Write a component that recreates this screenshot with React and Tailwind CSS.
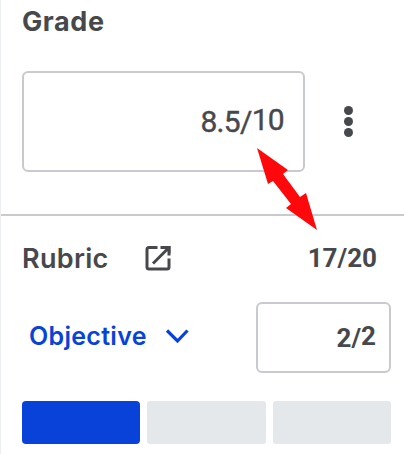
function GradeHeader() {
  return (
    <div className="flex h-[71px] items-start pl-[22px] pt-1">
      <h1 className="text-[27px] font-bold leading-9 tracking-[0.6px]">Grade</h1>
    </div>
  );
}

function GradeInput() {
  return (
    <div className="flex h-[143px] items-start pl-[22px]">
      <div className="flex h-[101px] w-[283px] items-center justify-end rounded-[6px] border-2 border-[#c9cad0] pr-[19px] font-['Roboto',sans-serif] text-[30px] leading-none tracking-[-0.7px]">
        <span className="[-webkit-text-stroke:0.4px_#47484c]">8.5/</span>
        <span className="relative -top-[2px] [-webkit-text-stroke:0.4px_#47484c]">10</span>
      </div>
      <button aria-label="More options" className="ml-[38px] mt-[35px] flex w-[10px] flex-col items-center gap-[2px]">
        <span className="size-[9px] rounded-full bg-[#47484c]" />
        <span className="size-[9px] rounded-full bg-[#47484c]" />
        <span className="size-[9px] rounded-full bg-[#47484c]" />
      </button>
    </div>
  );
}

function RubricRow() {
  return (
    <div className="flex h-[87px] items-start border-t-2 border-[#c9cad0] pl-[22px] pr-[27px] pt-[25px]">
      <h2 className="w-[123px] text-[27px] font-semibold leading-9 tracking-[0.3px]">Rubric</h2>
      <svg className="mt-[4px]" width="26" height="26" viewBox="0 0 26 26" fill="none" stroke="#47484c" strokeWidth="3">
        <path d="M12.5 2.5H4Q2 2.5 2 4.5V22Q2 24 4 24H22Q24 24 24 22V13.5" />
        <path d="M15.5 2.5H24V10.5M23.5 3L8 18.5" />
        <path d="M18 1H25.5V8.5Z" fill="#47484c" stroke="none" />
      </svg>
      <span className="ml-auto -mt-px font-['Roboto',sans-serif] text-[26px] font-bold leading-9">17/20</span>
    </div>
  );
}

function ObjectiveRow() {
  return (
    <div className="flex h-[100px] items-start pl-[29px] pr-[13px] pt-px">
      <button className="mt-[18px] flex items-center text-[#0842d9]">
        <span className="w-[136px] text-left text-[25px] font-semibold leading-8 tracking-[0.3px]">Objective</span>
        <svg width="24" height="16" viewBox="0 0 24 16" fill="none" stroke="currentColor" strokeWidth="3.2">
          <path d="M2 2.5L12.5 13L22.5 2.5" />
        </svg>
      </button>
      <div className="ml-auto flex h-[71px] w-[135px] items-center justify-end rounded-[6px] border-2 border-[#c9cad0] pr-[13px] font-['Roboto',sans-serif] text-[26px] font-bold leading-none">
        <span>2/</span>
        <span className="relative -top-[2px]">2</span>
      </div>
    </div>
  );
}

export default function App() {
  return (
    <main className="relative h-[454px] w-[404px] overflow-hidden border-l border-[#eeeff1] bg-white font-['Inter',sans-serif] text-[#47484c]">
      <div className="-ml-px">
        <GradeHeader />
        <GradeInput />
        <RubricRow />
        <ObjectiveRow />
        <div className="grid h-[43px] grid-cols-3 gap-[7px] pl-[22px] pr-[13px]">
          <div className="rounded-[4px] bg-[#0842d9]" />
          <div className="rounded-[3px] bg-[#e4e8eb]" />
          <div className="rounded-[3px] bg-[#e4e8eb]" />
        </div>
      </div>
      <svg className="absolute left-[255px] top-[147px]" width="62" height="84" viewBox="256 147 62 84" fill="#ff080c">
        <path d="M257 148L288 170L283 174L300 197L306 193L317 230L286 208L291 204L273 181L268 184Z" />
      </svg>
    </main>
  );
}
